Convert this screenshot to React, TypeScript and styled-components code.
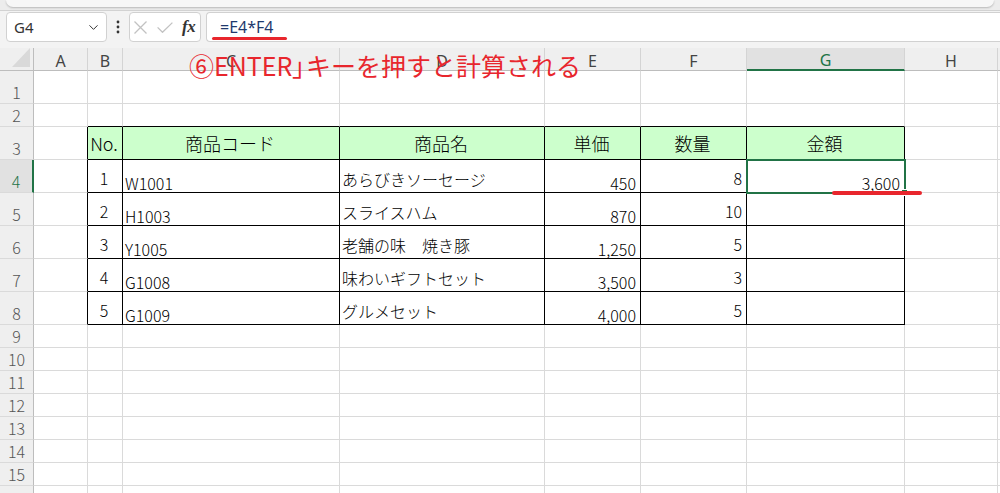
import styled, { createGlobalStyle } from "styled-components"
import { ChevronDown } from "lucide-react"

const GlobalStyle = createGlobalStyle`
  html, body { margin: 0; padding: 0; background: #fff; }
  body { font-family: "Noto Sans", "Noto Sans CJK JP", sans-serif; overflow: hidden; }
`

const GREEN = "#217346"
const RED = "#e8262d"
const GRID = "#dadada"

const Page = styled.div`
  position: relative;
  width: 1000px;
  height: 493px;
  overflow: hidden;
  background: #fff;
`

const TopStrip = styled.div`
  height: 11px;
  box-sizing: border-box;
  padding: 0 6px;
  background: #ececec;
  border-bottom: 1px solid #d2d2d2;
`

const RibbonEdge = styled.div`
  height: 7px;
  background: #f7f7f7;
  border-radius: 0 0 7px 7px;
  box-shadow: 0 1px 2px rgba(0, 0, 0, 0.22);
`

const FormulaBar = styled.div`
  display: flex;
  align-items: flex-start;
  height: 37px;
  box-sizing: border-box;
  padding: 1px 0 0 6px;
  background: #f3f3f3;
`

const BarBox = styled.div`
  height: 30px;
  box-sizing: border-box;
  display: flex;
  align-items: center;
  flex-shrink: 0;
  background: #fff;
  border: 1px solid #d1d1d1;
  border-radius: 4px;
`

const NameBox = styled(BarBox)`
  width: 101px;
  justify-content: space-between;
  padding: 0 5px 0 7px;
  font-size: 15px;
  color: #333;
`

const DotsWrap = styled.div`
  width: 22px;
  height: 30px;
  display: flex;
  align-items: center;
  justify-content: center;
`

const FxBox = styled(BarBox)`
  width: 72px;
  padding-left: 4px;
  gap: 10px;

  svg {
    flex-shrink: 0;
  }
`

const FxLabel = styled.span`
  font-family: "Liberation Serif", serif;
  font-style: italic;
  font-weight: bold;
  font-size: 17px;
  color: #333;
  letter-spacing: -0.5px;
  margin-left: -1px;
`

const FormulaInput = styled(BarBox)`
  position: relative;
  flex: 1;
  flex-shrink: 1;
  margin-left: 5px;
  border-right: none;
  border-radius: 4px 0 0 4px;
  padding-left: 13px;
  font-size: 16px;
  color: #1f3a6e;
`

const FormulaMark = styled.div`
  position: absolute;
  left: 5px;
  top: 24px;
  width: 75px;
  height: 3px;
  border-radius: 2px;
  background: ${RED};
`

const Sheet = styled.div<{ $rows: string }>`
  display: grid;
  grid-template-columns: 34px 54px 35px 217px 205px 96px 106px 158px 93px 120px;
  grid-template-rows: 23px ${p => p.$rows};
`

const Corner = styled.div`
  position: relative;
  box-sizing: border-box;
  background: #efefef;
  border-right: 1px solid #bdbdbd;
  border-bottom: 1px solid #bdbdbd;

  &::after {
    content: "";
    position: absolute;
    right: 3px;
    bottom: 3px;
    border-left: 18px solid transparent;
    border-bottom: 19px solid #d9d9d9;
  }
`

const ColHeader = styled.div<{ $active?: boolean }>`
  box-sizing: border-box;
  display: flex;
  align-items: center;
  justify-content: center;
  padding-top: 3px;
  font-size: 16px;
  color: ${p => (p.$active ? GREEN : "#444")};
  background: ${p => (p.$active ? "#e1e1e1" : "#efefef")};
  border-right: 1px solid #d4d4d4;
  border-bottom: ${p => (p.$active ? `2px solid ${GREEN}` : "1px solid #bdbdbd")};
`

const RowHeader = styled.div<{ $active?: boolean }>`
  box-sizing: border-box;
  display: flex;
  align-items: flex-end;
  justify-content: center;
  padding-bottom: 3px;
  overflow: hidden;
  font-family: "Noto Sans CJK JP", sans-serif;
  font-weight: 300;
  font-size: 16px;
  line-height: 1;
  color: ${p => (p.$active ? GREEN : "#555")};
  background: ${p => (p.$active ? "#e1e1e1" : "#efefef")};
  border-right: ${p => (p.$active ? `2px solid ${GREEN}` : "1px solid #bdbdbd")};
  border-bottom: 1px solid #dadada;
`

type HAlign = "left" | "center" | "right"

const Cell = styled.div<{
  $h: HAlign
  $pb: number
  $middle?: boolean
  $head?: boolean
  $edgeR?: boolean
  $edgeB?: boolean
  $selected?: boolean
}>`
  position: relative;
  box-sizing: border-box;
  display: flex;
  justify-content: ${p => (p.$h === "left" ? "flex-start" : p.$h === "right" ? "flex-end" : "center")};
  align-items: ${p => (p.$middle ? "center" : "flex-end")};
  padding: 0 4px ${p => p.$pb}px 2px;
  font-family: "Noto Sans CJK JP", sans-serif;
  font-weight: 300;
  font-size: ${p => (p.$head ? 18 : 16)}px;
  line-height: 1;
  white-space: nowrap;
  color: #000;
  background: ${p => (p.$head ? "#ccffcc" : "#fff")};
  border-right: 1px solid ${p => (p.$edgeR ? "#000" : GRID)};
  border-bottom: 1px solid ${p => (p.$edgeB ? "#000" : GRID)};
  z-index: ${p => (p.$selected ? 2 : "auto")};

  ${p =>
    p.$selected &&
    `
    &::after {
      content: "";
      position: absolute;
      top: -1px;
      left: -1px;
      right: -2px;
      bottom: -2px;
      border: 2px solid ${GREEN};
    }
    &::before {
      content: "";
      position: absolute;
      right: -4px;
      bottom: -4px;
      width: 5px;
      height: 5px;
      background: ${GREEN};
      border: 1px solid #fff;
      z-index: 1;
    }
  `}
`

const Note = styled.div`
  position: absolute;
  left: 189px;
  top: 53px;
  font-family: "Noto Sans CJK JP", sans-serif;
  font-size: 25px;
  line-height: 1;
  color: ${RED};
  white-space: nowrap;
  z-index: 5;
`

const Bracket = styled.span`
  font-feature-settings: "palt";
  margin-right: 1px;
`

const ResultMark = styled.div`
  position: absolute;
  left: 832px;
  top: 191px;
  width: 90px;
  height: 4px;
  border-radius: 2px;
  background: ${RED};
  z-index: 5;
`

const letters = ["A", "B", "C", "D", "E", "F", "G", "H", ""]
const rowHeights = [33, 23, 33, 33, 33, 33, 33, 33, 23, 23, 23, 23, 23, 23, 23, 23]

const headings = ["No.", "商品コード", "商品名", "単価", "数量", "金額"]
const items = [
  ["1", "W1001", "あらびきソーセージ", "450", "8", "3,600"],
  ["2", "H1003", "スライスハム", "870", "10", ""],
  ["3", "Y1005", "老舗の味　焼き豚", "1,250", "5", ""],
  ["4", "G1008", "味わいギフトセット", "3,500", "3", ""],
  ["5", "G1009", "グルメセット", "4,000", "5", ""],
]

// per table column (B..G): alignment and bottom padding for data rows
const colStyle: { h: HAlign; pb: number }[] = [
  { h: "center", pb: 6 },
  { h: "left", pb: 1 },
  { h: "left", pb: 5 },
  { h: "right", pb: 1 },
  { h: "right", pb: 6 },
  { h: "right", pb: 1 },
]

const Dots = () => (
  <svg width="4" height="14" viewBox="0 0 4 14">
    <circle cx="2" cy="2" r="1.4" fill="#333" />
    <circle cx="2" cy="7" r="1.4" fill="#333" />
    <circle cx="2" cy="12" r="1.4" fill="#333" />
  </svg>
)

const CancelIcon = () => (
  <svg width="13" height="13" viewBox="0 0 13 13">
    <path d="M0.5 0.5L12.5 12.5M12.5 0.5L0.5 12.5" stroke="#c2c2c2" strokeWidth="1.3" fill="none" />
  </svg>
)

const EnterIcon = () => (
  <svg width="16" height="11" viewBox="0 0 16 11">
    <path d="M0.6 5.4L5.5 10.3L15.4 0.6" stroke="#c2c2c2" strokeWidth="1.3" fill="none" />
  </svg>
)

export default function App() {
  const cells: React.ReactNode[] = []

  rowHeights.forEach((_, r) => {
    const rowNo = r + 1
    cells.push(
      <RowHeader key={`rh${rowNo}`} $active={rowNo === 4}>
        {rowNo < 16 ? rowNo : ""}
      </RowHeader>
    )
    letters.forEach((_, c) => {
      const inRows = rowNo >= 3 && rowNo <= 8
      const inCols = c >= 1 && c <= 6
      const inTable = inRows && inCols
      const edgeR = inTable || (inRows && c === 0)
      const edgeB = inTable || (rowNo === 2 && inCols)
      let text = ""
      let h: HAlign = "left"
      let pb = 1
      let head = false
      let middle = false
      if (inTable) {
        const t = c - 1
        if (rowNo === 3) {
          text = headings[t]
          h = "center"
          head = true
          middle = true
        } else {
          text = items[rowNo - 4][t]
          h = colStyle[t].h
          pb = colStyle[t].pb
        }
      }
      cells.push(
        <Cell
          key={`c${rowNo}-${c}`}
          $h={h}
          $pb={pb}
          $head={head}
          $middle={middle}
          $edgeR={edgeR}
          $edgeB={edgeB}
          $selected={rowNo === 4 && c === 6}
        >
          {text}
        </Cell>
      )
    })
  })

  return (
    <Page>
      <GlobalStyle />
      <TopStrip>
        <RibbonEdge />
      </TopStrip>
      <FormulaBar>
        <NameBox>
          <span>G4</span>
          <ChevronDown size={15} strokeWidth={1.6} color="#333" />
        </NameBox>
        <DotsWrap>
          <Dots />
        </DotsWrap>
        <FxBox>
          <CancelIcon />
          <EnterIcon />
          <FxLabel>fx</FxLabel>
        </FxBox>
        <FormulaInput>
          =E4*F4
          <FormulaMark />
        </FormulaInput>
      </FormulaBar>
      <Sheet $rows={rowHeights.map(h => `${h}px`).join(" ")}>
        <Corner />
        {letters.map((l, i) => (
          <ColHeader key={`h${i}`} $active={l === "G"}>
            {l}
          </ColHeader>
        ))}
        {cells}
      </Sheet>
      <Note>
        ⑥ENTER<Bracket>」</Bracket>キーを押すと計算される
      </Note>
      <ResultMark />
    </Page>
  )
}
